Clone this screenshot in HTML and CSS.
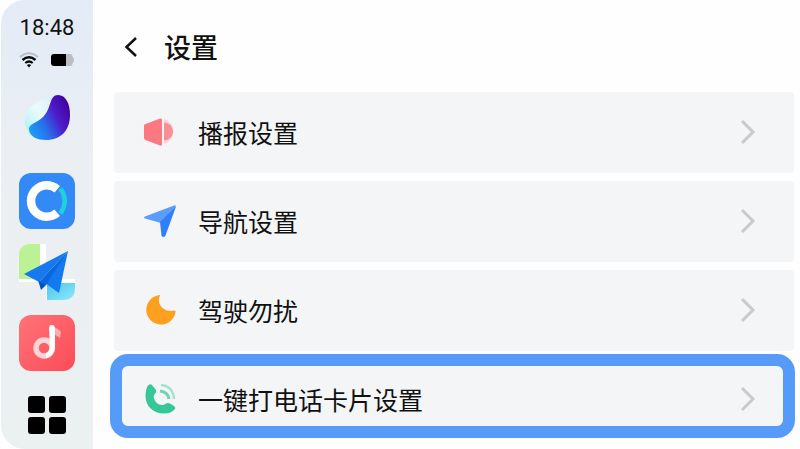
FILE: index.html
```
<!DOCTYPE html>
<html lang="zh-CN">
<head>
    <meta charset="utf-8">
    <meta name="viewport" content="width=device-width, initial-scale=1">
    <title>设置</title>
    <link rel="stylesheet" href="styles.css">
</head>
<body>
    <aside class="sidebar">
        <div class="status">
            <time class="clock">18:48</time>
            <div class="status-icons">
                <svg width="20" height="16" viewBox="0 0 20 16" fill="none">
                    <path d="M1 5Q10 -2.500 19 5" stroke="#b9bec8" stroke-width="2"/>
                    <path d="M3.500 8Q10 2.500 16.500 8" stroke="#08090b" stroke-width="2.400"/>
                    <path d="M6.300 11Q10 8 13.700 11" stroke="#08090b" stroke-width="2.200"/>
                    <path d="M7.800 13Q10 11.500 12.200 13L10 15.500z" fill="#08090b"/>
                </svg>
                <svg width="24" height="12" viewBox="0 0 24 12">
                    <path d="M15 0h4q2.500 0 2.500 2.500Q23 4 23 6t-1.500 3.500Q21.500 12 19 12h-4z" fill="#bdbcc6"/>
                    <path d="M3 0h12v12H3q-3 0-3-3V3q0-3 3-3z" fill="#000"/>
                </svg>
            </div>
        </div>

        <nav class="apps">
            <button class="app app-assistant" aria-label="语音助手">
                <svg width="56" height="56" viewBox="0 0 56 56">
                    <defs>
                        <linearGradient id="orb-light" x1="0" y1="1" x2="1" y2="0">
                            <stop offset="0" stop-color="#a5edf7"/>
                            <stop offset=".5" stop-color="#e8fbfd"/>
                            <stop offset="1" stop-color="#dce9fa"/>
                        </linearGradient>
                        <linearGradient id="orb-dark" x1="0" y1=".85" x2="1" y2=".3">
                            <stop offset="0" stop-color="#18a5f8"/>
                            <stop offset=".35" stop-color="#2870ed"/>
                            <stop offset=".68" stop-color="#4d1ccb"/>
                            <stop offset="1" stop-color="#4203a0"/>
                        </linearGradient>
                    </defs>
                    <path d="M6 34C5 18 20 7 38 6L42 24 16 48Q8 43 6 34z" fill="url(#orb-light)"/>
                    <path d="M39 5C47 5 51 14 51 25C51 40 42 50 27 50C19 50 11 47 10 40C9 34 18 33 24 27C33 18 30 5 39 5z" fill="url(#orb-dark)"/>
                </svg>
            </button>
            <button class="app" aria-label="车联">
                <svg width="56" height="56" viewBox="0 0 56 56" fill="none">
                    <rect width="56" height="56" rx="12" fill="#338af7"/>
                    <path d="M41 13A20 20 0 1 0 41 43L35.500 36.500A11.500 11.500 0 1 1 35.500 19.500z" fill="#fff"/>
                    <path d="M41.500 15.500Q50 28 41.500 40.500" stroke="#1cd2dd" stroke-width="4.500"/>
                </svg>
            </button>
            <button class="app" aria-label="地图">
                <svg width="56" height="56" viewBox="0 0 56 56">
                    <defs>
                        <linearGradient id="map-sea" x1="0" y1="0" x2="1" y2="1">
                            <stop offset="0" stop-color="#4cc4f0"/>
                            <stop offset="1" stop-color="#8ee9f8"/>
                        </linearGradient>
                    </defs>
                    <path d="M21 0h6v35h29v4H34v17h-7V38H0v-3h21z" fill="#fff"/>
                    <path d="M12 0h9v35H0V12Q0 0 12 0z" fill="#baf295"/>
                    <path d="M28 39h28v5q0 12-12 12H28z" fill="url(#map-sea)"/>
                    <path d="M19 36L22 46 28 40z" fill="#064fc2"/>
                    <path d="M49 7L5 30 20 38z" fill="#1679ef"/>
                    <path d="M49 7L26 39 40 49z" fill="#1479f0"/>
                    <path d="M49 7L20 38 27 41z" fill="#0b68dc"/>
                </svg>
            </button>
            <button class="app" aria-label="音乐">
                <svg width="56" height="56" viewBox="0 0 56 56">
                    <defs>
                        <linearGradient id="music-bg" x1="0" y1="0" x2="1" y2="1">
                            <stop offset="0" stop-color="#ff7377"/>
                            <stop offset="1" stop-color="#fc4c59"/>
                        </linearGradient>
                    </defs>
                    <rect width="56" height="56" rx="12" fill="url(#music-bg)"/>
                    <path d="M30 10q4 1 7 3 4 2 5 4l-1 6q-4-3-7-4z" fill="#ffaaae"/>
                    <circle cx="25" cy="33" r="8" fill="none" stroke="#ffd3d5" stroke-width="5.500"/>
                    <path d="M30 14q0-4 3-4 3 0 3 4v18Q36 41 27 43.500V38Q31 37 31 31z" fill="#fff"/>
                </svg>
            </button>
            <button class="app app-grid" aria-label="全部应用">
                <svg width="38" height="38" viewBox="0 0 38 38" fill="#000">
                    <rect width="17" height="17" rx="3"/>
                    <rect x="21" width="17" height="17" rx="3"/>
                    <rect y="21" width="17" height="17" rx="3"/>
                    <rect x="21" y="21" width="17" height="17" rx="3"/>
                </svg>
            </button>
        </nav>
    </aside>

    <main class="content">
        <header class="page-header">
            <button class="back" aria-label="返回">
                <svg width="14" height="20" viewBox="0 0 14 20" fill="none" stroke="#111" stroke-width="2.500">
                    <path d="M12 1L2.500 10l9.500 9"/>
                </svg>
            </button>
            <h1>设置</h1>
        </header>

        <ul class="settings">
            <li>
                <a class="row" href="#broadcast">
                    <svg class="row-icon" width="36" height="36" viewBox="0 0 36 36">
                        <path d="M22 5A13 13 0 0 1 22 30z" fill="#fbcfd3"/>
                        <path d="M22 8.500a9 9 0 0 1 0 18z" fill="#fa8e95"/>
                        <path d="M2 11.500q0-1.500 1.500-1.500L18 4.500q2-.5 2 1v25q0 1.500-2 1L3.500 26Q2 25.500 2 24z" fill="#fb7980"/>
                    </svg>
                    <span class="row-label">播报设置</span>
                    <svg class="chevron" width="16" height="26" viewBox="0 0 16 26"><path d="M2 2l11 11L2 24"/></svg>
                </a>
            </li>
            <li>
                <a class="row" href="#navigation">
                    <svg class="row-icon" width="36" height="36" viewBox="0 0 36 36">
                        <path d="M32 2.500Q34.500 1.500 33.500 4.500L19 20 3 15.500q-2-1 0-2z" fill="#5b9dfb"/>
                        <path d="M34 3.500L23.500 32.500q-2 3-4 0L18 19z" fill="#317ff8"/>
                    </svg>
                    <span class="row-label">导航设置</span>
                    <svg class="chevron" width="16" height="26" viewBox="0 0 16 26"><path d="M2 2l11 11L2 24"/></svg>
                </a>
            </li>
            <li>
                <a class="row" href="#do-not-disturb">
                    <svg class="row-icon" width="36" height="36" viewBox="0 0 36 36">
                        <path d="M18 3.500C14 12 22 21 32 18.500Q34 18 33.500 20A14.700 14.700 0 1 1 16.500 3.300Q18.500 2.500 18 3.500z" fill="#fda01f"/>
                    </svg>
                    <span class="row-label">驾驶勿扰</span>
                    <svg class="chevron" width="16" height="26" viewBox="0 0 16 26"><path d="M2 2l11 11L2 24"/></svg>
                </a>
            </li>
            <li>
                <a class="row row-selected" href="#call-card">
                    <svg class="row-icon" width="36" height="36" viewBox="0 0 36 36" fill="none">
                        <path d="M6.500 4q2-1.500 3.500 0l4 5q1 2-1 3.500-2 2-1 5 2 6 8 6.500 2 0 4-1.500 2-1 4 0l4 2.500q2 1.500 1 3-4 4.500-11 4.500C11 32.500 3.500 25 3.500 15Q3.500 7 6.500 4z" fill="#37c695"/>
                        <path d="M19 4Q31 5 32 18" stroke="#a7e2ce" stroke-width="2.500"/>
                        <path d="M18 10q8 1 9 8" stroke="#6ed3b1" stroke-width="3"/>
                    </svg>
                    <span class="row-label">一键打电话卡片设置</span>
                    <svg class="chevron" width="16" height="26" viewBox="0 0 16 26"><path d="M2 2l11 11L2 24"/></svg>
                </a>
            </li>
        </ul>
    </main>
</body>
</html>
```
FILE: styles.css
```
* {
    box-sizing: border-box;
}

body {
    display: flex;
    min-height: 100vh;
    margin: 0;
    background: #fefefe;
    color: #111;
    font-family: "Noto Sans CJK SC", sans-serif;
}

button {
    padding: 0;
    border: none;
    background: none;
    cursor: pointer;
}

svg {
    display: block;
}

/* sidebar */
.sidebar {
    display: flex;
    flex-direction: column;
    align-items: center;
    flex: 0 0 92px;
    margin-left: 1px;
    padding-top: 16px;
    border-radius: 24px 0 0 24px;
    background: linear-gradient(#e3ebf7, #ebeff3 35%, #ebf0f1);
}

.status {
    display: flex;
    flex-direction: column;
    align-items: center;
    gap: 12px;
}

.clock {
    font-family: Roboto, sans-serif;
    font-size: 22px;
    line-height: 24px;
}

.status-icons {
    display: flex;
    align-items: center;
    gap: 12px;
}

.apps {
    display: flex;
    flex-direction: column;
    align-items: center;
    gap: 15px;
    margin-top: 22px;
}

.app-assistant {
    margin-bottom: 12px;
}

.app-grid {
    margin-top: 10px;
}

/* content */
.content {
    flex: 1;
    padding: 28px 6px 0 21px;
}

.page-header {
    display: flex;
    align-items: center;
    gap: 26px;
    height: 38px;
    padding-left: 10px;
}

.page-header h1 {
    margin: 0;
    font-size: 27px;
    font-weight: 500;
    line-height: 38px;
}

.settings {
    display: flex;
    flex-direction: column;
    gap: 8px;
    margin: 26px 0 0;
    padding: 0;
    list-style: none;
}

.row {
    display: flex;
    align-items: center;
    gap: 20px;
    height: 81px;
    padding: 0 38px 2px 28px;
    border-radius: 4px;
    background: #f4f5f7;
    color: #111;
    text-decoration: none;
}

.row-label {
    flex: 1;
    font-size: 25px;
    line-height: 36px;
}

.chevron {
    fill: none;
    stroke: #c9cacc;
    stroke-width: 3;
}

.row-selected {
    position: relative;
    z-index: 0;
    background: none;
}

.row-selected::before {
    content: "";
    position: absolute;
    inset: -5px -1px 2px -4px;
    z-index: -1;
    border: 12px solid #579bf8;
    border-radius: 18px;
    background: #f4f5f7;
}
```
